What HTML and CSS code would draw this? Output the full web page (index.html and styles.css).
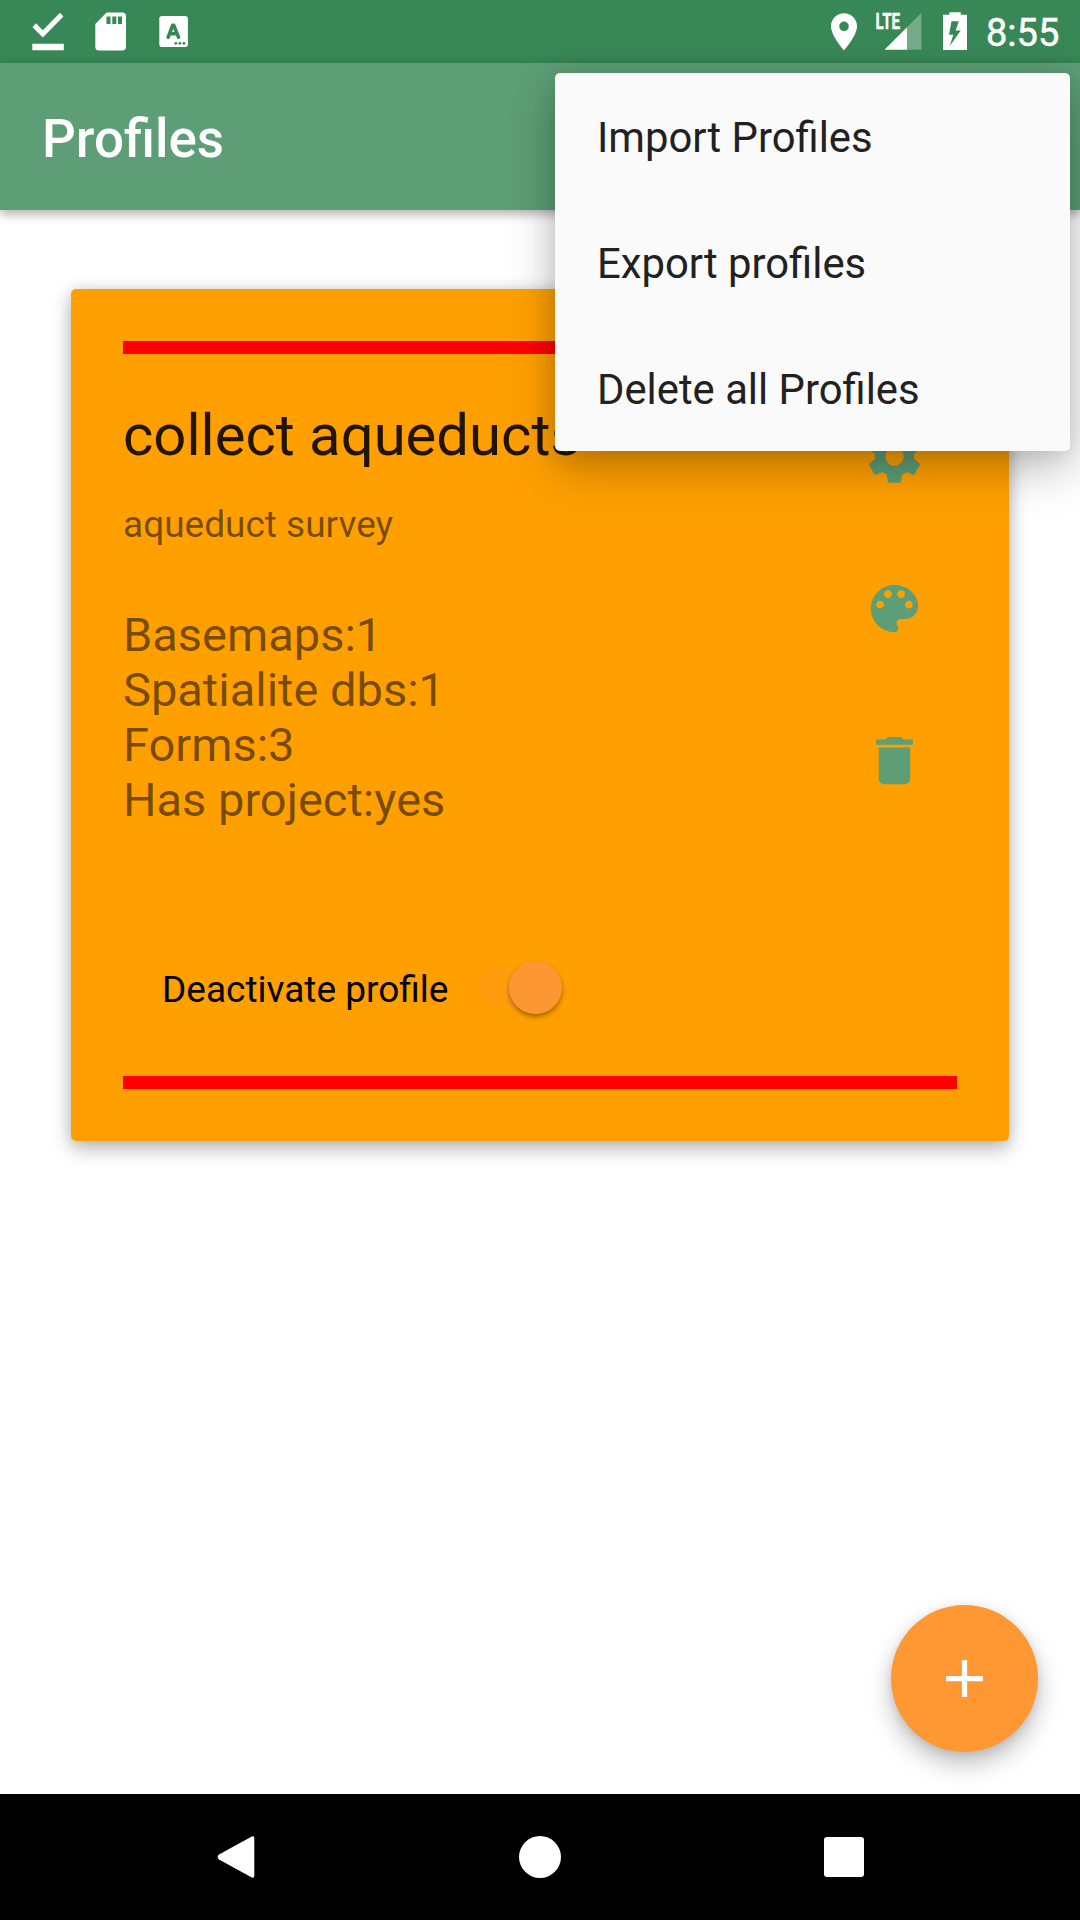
FILE: index.html
```html
<!DOCTYPE html>
<html lang="en">
<head>
<meta charset="utf-8">
<title>Profiles</title>
<link rel="stylesheet" href="styles.css">
</head>
<body>
<div class="screen">
  <div class="status-bar">
    <svg class="status-left" width="200" height="63" viewBox="0 0 200 63">
      <path d="M35.9 23.3 42.8 30.2 60 12.8 63.4 16.6 42.8 37.6 32.5 27.3ZM32.3 43.8H63.8V50.2H32.3Z"/>
      <path fill-rule="evenodd" d="M106.6 12.5H122.3Q126 12.5 126 16.2V46.8Q126 50.5 122.3 50.5H99Q95.3 50.5 95.3 46.8V24ZM106.5 16.5V24H110.5V16.5ZM112.3 16.5V24H116.3V16.5ZM118 16.5V24H122V16.5Z"/>
      <rect x="159.3" y="16" width="28.6" height="31" rx="2.8"/>
      <path class="cut-line" d="M168.2 37.2 172.7 25.2H173.7L178.5 37.2M170.2 33.8H176.5"/>
      <g class="cut"><circle cx="175.8" cy="43.3" r="1.4"/><circle cx="179.8" cy="43.3" r="1.4"/><circle cx="183.9" cy="43.3" r="1.4"/></g>
    </svg>
    <div class="status-right">
      <svg width="160" height="63" viewBox="820 0 160 63">
        <path fill-rule="evenodd" d="M844 13.2C836.8 13.2 831 19 831 26.2 831 36 844 50.3 844 50.3S857 36 857 26.2C857 19 851.2 13.2 844 13.2ZM844 31.1A4.8 4.8 0 1 1 844 21.5 4.8 4.8 0 0 1 844 31.1Z"/>
        <text class="lte" x="875.6" y="29.2" textLength="24.5" lengthAdjust="spacingAndGlyphs">LTE</text>
        <path class="signal-off" d="M907 27.3 921.4 12.8V49.7H907Z"/>
        <path d="M884.5 49.7 907 27.3V49.7Z"/>
        <path fill-rule="evenodd" d="M949.3 12.2H960.7V14.8H967V49.9H943V14.8H949.3ZM951.5 21.2 949 34.8H953.3L949.8 46 960.7 30.4H955.7L958.8 21.2Z"/>
      </svg>
      <span class="clock">8:55</span>
    </div>
  </div>

  <header class="app-bar"><h1 class="title">Profiles</h1></header>

  <main class="content">
    <section class="card">
      <div class="stripe"></div>
      <div class="card-body">
        <div class="info">
          <h2 class="name">collect aqueducts</h2>
          <p class="description">aqueduct survey</p>
          <p class="details">Basemaps:1<br>Spatialite dbs:1<br>Forms:3<br>Has project:yes</p>
        </div>
        <div class="actions">
          <svg class="icon" viewBox="0 0 24 24"><path d="M19.43 12.98c.04-.32.07-.64.07-.98s-.03-.66-.07-.98l2.11-1.65c.19-.15.24-.42.12-.64l-2-3.46c-.12-.22-.39-.3-.61-.22l-2.49 1c-.52-.4-1.08-.73-1.69-.98l-.38-2.65C14.46 2.18 14.25 2 14 2h-4c-.25 0-.46.18-.49.42l-.38 2.65c-.61.25-1.17.59-1.69.98l-2.49-1c-.23-.09-.49 0-.61.22l-2 3.46c-.13.22-.07.49.12.64l2.11 1.65c-.04.32-.07.65-.07.98s.03.66.07.98l-2.11 1.65c-.19.15-.24.42-.12.64l2 3.46c.12.22.39.3.61.22l2.49-1c.52.4 1.08.73 1.69.98l.38 2.65c.03.24.24.42.49.42h4c.25 0 .46-.18.49-.42l.38-2.65c.61-.25 1.17-.59 1.69-.98l2.49 1c.23.09.49 0 .61-.22l2-3.46c.12-.22.07-.49-.12-.64l-2.11-1.65zM12 15.5c-1.93 0-3.5-1.57-3.5-3.5s1.57-3.5 3.5-3.5 3.5 1.57 3.5 3.5-1.57 3.5-3.5 3.5z"/></svg>
          <svg class="icon" viewBox="0 0 24 24"><path d="M12 3c-4.97 0-9 4.03-9 9s4.03 9 9 9c.83 0 1.5-.67 1.5-1.5 0-.39-.15-.74-.39-1.01-.23-.26-.38-.61-.38-.99 0-.83.67-1.5 1.5-1.5H16c2.76 0 5-2.24 5-5 0-4.42-4.03-8-9-8zm-5.5 9c-.83 0-1.5-.67-1.5-1.5S5.67 9 6.5 9 8 9.67 8 10.5 7.33 12 6.5 12zm3-4C8.67 8 8 7.33 8 6.5S8.67 5 9.5 5s1.5.67 1.5 1.5S10.33 8 9.5 8zm5 0c-.83 0-1.5-.67-1.5-1.5S13.67 5 14.5 5s1.5.67 1.5 1.5S15.33 8 14.5 8zm3 4c-.83 0-1.5-.67-1.5-1.5S16.67 9 17.5 9s1.5.67 1.5 1.5-.67 1.5-1.5 1.5z"/></svg>
          <svg class="icon" viewBox="0 0 24 24"><path d="M6 19c0 1.1.9 2 2 2h8c1.1 0 2-.9 2-2V7H6v12zM19 4h-3.5l-1-1h-5l-1 1H5v2h14V4z"/></svg>
        </div>
      </div>
      <div class="toggle-row">
        <span class="toggle-label">Deactivate profile</span>
        <span class="switch"><span class="thumb"></span></span>
      </div>
      <div class="stripe"></div>
    </section>
  </main>

  <nav class="nav-bar">
    <svg width="42" height="42" viewBox="0 0 42 42"><path d="M36.8 .5Q39.3-.8 39.3 2.500V39.500Q39.3 42.800 36.8 41.500L4 23.500Q1.2 21 4 18.500Z"/></svg>
    <svg width="42" height="42" viewBox="0 0 42 42"><circle cx="21" cy="21" r="21"/></svg>
    <svg width="42" height="42" viewBox="0 0 42 42"><rect x="1" y="1" width="40" height="40" rx="3"/></svg>
  </nav>

  <button class="fab" aria-label="Add profile"><svg width="63" height="63" viewBox="0 0 24 24"><path d="M19 13h-6v6h-2v-6H5v-2h6V5h2v6h6v2z"/></svg></button>

  <div class="menu">
    <div class="menu-item">Import Profiles</div>
    <div class="menu-item">Export profiles</div>
    <div class="menu-item">Delete all Profiles</div>
  </div>
</div>
</body>
</html>
```
FILE: styles.css
```css
* { box-sizing: border-box; margin: 0; padding: 0; }

body { font-family: Roboto, sans-serif; }

.screen {
  position: relative;
  display: flex;
  flex-direction: column;
  width: 1080px;
  height: 1920px;
  overflow: hidden;
  background: #fff;
}

.status-bar {
  display: flex;
  justify-content: space-between;
  height: 63px;
  background: #388756;
  fill: #fff;
}
.cut { fill: #388756; }
.cut-line { fill: none; stroke: #388756; stroke-width: 3.6; stroke-linecap: round; stroke-linejoin: round; }
.status-right { display: flex; width: 260px; }
.status-right svg { flex: none; }
.signal-off { fill: #fff; opacity: .3; }
.lte { font: 700 22.5px Roboto, sans-serif; stroke: #fff; stroke-width: .4px; }
.clock {
  padding-left: 6px;
  font-size: 38px;
  font-weight: 400;
  -webkit-text-stroke: .5px #fff;
  line-height: 67px;
  color: #fff;
}

.app-bar {
  z-index: 1;
  display: flex;
  align-items: center;
  height: 147px;
  padding: 4px 42px 0;
  background: #5d9e76;
  box-shadow: 0 4px 10px rgba(0, 0, 0, .32);
}
.title { font-size: 53px; font-weight: 500; color: #fff; }

.content { flex: 1; padding: 79px 71px 0; }

.card {
  display: flex;
  flex-direction: column;
  height: 852px;
  padding: 52px;
  border-radius: 5px;
  background: #ffa000;
  box-shadow: 0 8px 20px rgba(0, 0, 0, .26), 0 0 14px rgba(0, 0, 0, .12);
}
.stripe { height: 13px; background: #f00; }

.card-body { display: flex; justify-content: space-between; height: 561px; }
.info { padding-top: 47px; color: rgba(0, 0, 0, .54); }
.name { font-size: 58px; font-weight: 400; line-height: 68px; color: rgba(0, 0, 0, .87); }
.description { margin-top: 34px; font-size: 37px; line-height: 43px; }
.details { margin-top: 61px; font-size: 47px; line-height: 55px; }

.actions { display: flex; flex-direction: column; gap: 89px; padding: 71px 31px 0 0; }
.icon { width: 63px; height: 63px; fill: #5d9e76; }

.toggle-row {
  display: flex;
  align-items: center;
  height: 161px;
  padding: 0 0 16px 39px;
}
.toggle-label { width: 316px; font-size: 37px; color: #000; padding-top: 3px; }
.switch {
  display: flex;
  align-items: center;
  justify-content: flex-end;
  width: 77px;
  height: 37px;
  border-radius: 19px;
  background: rgba(255, 152, 51, .3);
}
.thumb {
  flex: none;
  width: 53px;
  height: 53px;
  margin-right: -7px;
  border-radius: 50%;
  background: #fd9731;
  box-shadow: 0 3px 5px rgba(0, 0, 0, .35);
}

.nav-bar {
  display: flex;
  align-items: center;
  justify-content: center;
  gap: 262px;
  height: 126px;
  background: #000;
  fill: #fff;
}

.fab {
  position: absolute;
  right: 42px;
  bottom: 168px;
  display: flex;
  align-items: center;
  justify-content: center;
  width: 147px;
  height: 147px;
  border: 0;
  border-radius: 50%;
  background: #ff9833;
  fill: #fff;
  box-shadow: 0 12px 24px rgba(0, 0, 0, .25), 0 2px 8px rgba(0, 0, 0, .1);
}

.menu {
  position: absolute;
  z-index: 2;
  top: 73px;
  left: 555px;
  width: 515px;
  border-radius: 5px;
  background: #fafafa;
  box-shadow: 0 18px 48px rgba(0, 0, 0, .26), 0 2px 24px rgba(0, 0, 0, .1);
}
.menu-item {
  height: 126px;
  padding-left: 42px;
  font-size: 41.8px;
  line-height: 130px;
  color: #212121;
}
```
